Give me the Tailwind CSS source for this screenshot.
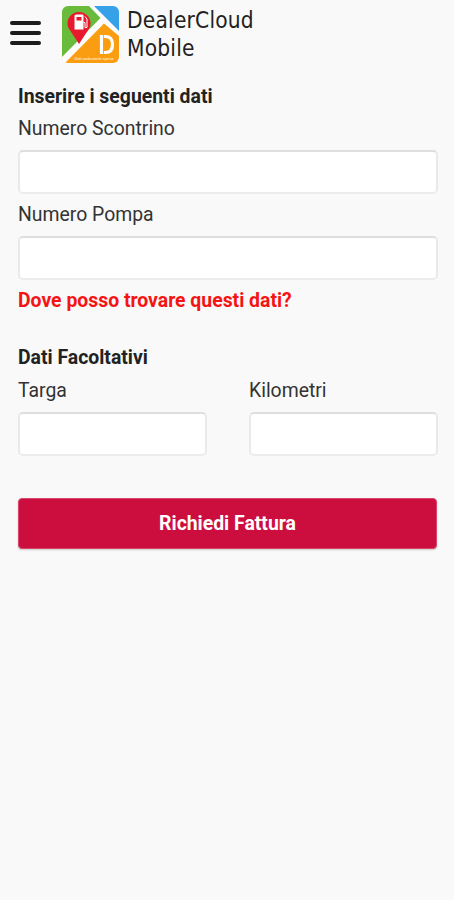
<!DOCTYPE html>
<html lang="it">
<head>
    <meta charset="UTF-8">
    <meta name="viewport" content="width=device-width, initial-scale=1.0">
    <title>DealerCloud Mobile</title>
    <script src="https://cdn.jsdelivr.net/npm/@tailwindcss/browser@4"></script>
</head>

<body class="min-h-screen bg-[#f9f9f9] font-[Roboto,sans-serif] text-[19.4px] leading-8 text-[#333]">
    <header class="flex h-[68px] items-start pl-[10px]">
        <button type="button" aria-label="Menu" class="mt-[21px] flex w-[31px] flex-col gap-[6px]">
            <span class="h-[4px] w-full rounded-full bg-[#1c1c1c]"></span>
            <span class="h-[4px] w-full rounded-full bg-[#1c1c1c]"></span>
            <span class="h-[4px] w-full rounded-full bg-[#1c1c1c]"></span>
        </button>

        <svg class="mt-[5.5px] ml-[21px] h-[57px] w-[57px] shrink-0" viewBox="0 0 57 57">
            <defs>
                <clipPath id="tile"><rect width="57" height="57" rx="6"/></clipPath>
            </defs>
            <g clip-path="url(#tile)">
                <rect width="57" height="57" fill="#fdfdfd"/>
                <path d="M0 0H27L38.500 12L0 51Z" fill="#69bb3c"/>
                <path d="M32 0H57V25Z" fill="#36a0e9"/>
                <path d="M42 17.500L57 30V57H3Z" fill="#fb9d11"/>
                <path d="M17 38L7.500 23.500C6 21.500 5.500 19.500 5.500 17.500A11.500 11.500 0 0 1 28.500 17.500C28.500 19.500 28 21.500 26.500 23.500Z" fill="#e8182d"/>
                <path d="M14 8.500H20.500Q21.500 8.500 21.500 9.500V23.500H12.500V10Q12.500 8.500 14 8.500Z" fill="#fff"/>
                <path d="M14.500 11H19.500V14.500H14.500Z" fill="#e8182d"/>
                <path d="M21.500 16.500H23V21.500H25V13L23 10.500" fill="none" stroke="#fff" stroke-width="1"/>
                <path d="M39.500 30.500H43.500C48.500 30.500 50.500 33.500 50.500 38.500S48.500 46.500 43.500 46.500H39.500Z" fill="none" stroke="#fff" stroke-width="3.200"/>
                <path d="M41.500 28V49" stroke="#fb9d11" stroke-width="0.800"/>
            </g>
            <text x="12.500" y="53.500" textLength="39" fill="#ffe2b5" font-family="Liberation Sans" font-size="4" font-weight="bold">Dati carburante spesa</text>
        </svg>

        <h1 class="mt-[6px] ml-[8px] w-[160px] font-['DejaVu_Sans_Condensed','DejaVu_Sans',sans-serif] text-[22.5px] font-stretch-condensed leading-[28px] tracking-[0.2px] text-[#222]">DealerCloud<br>Mobile</h1>
    </header>

    <main class="px-[18px] pt-[13px]">
        <h2 class="font-bold text-[#222]">Inserire i seguenti dati</h2>
        <label for="scontrino" class="block">Numero Scontrino</label>
        <input id="scontrino" type="text" class="my-[5px] block h-[44px] w-[420px] rounded-[5px] border-2 border-t-[#dedede] border-x-[#e9e9e9] border-b-[#ececec] bg-white px-3">
        <label for="pompa" class="block">Numero Pompa</label>
        <input id="pompa" type="text" class="my-[5px] block h-[44px] w-[420px] rounded-[5px] border-2 border-t-[#dedede] border-x-[#e9e9e9] border-b-[#ececec] bg-white px-3">
        <a href="#" class="block font-bold text-[#f51414]">Dove posso trovare questi dati?</a>

        <h2 class="mt-[25px] font-bold text-[#222]">Dati Facoltativi</h2>
        <div class="mt-px flex gap-[42px]">
            <div class="w-[189px] shrink-0">
                <label for="targa" class="block">Targa</label>
                <input id="targa" type="text" class="mt-[5px] block h-[44px] w-full rounded-[5px] border-2 border-t-[#dedede] border-x-[#e9e9e9] border-b-[#ececec] bg-white px-3">
            </div>
            <div class="w-[189px] shrink-0">
                <label for="kilometri" class="block">Kilometri</label>
                <input id="kilometri" type="text" class="mt-[5px] block h-[44px] w-full rounded-[5px] border-2 border-t-[#dedede] border-x-[#e9e9e9] border-b-[#ececec] bg-white px-3">
            </div>
        </div>

        <button type="button" class="mt-[42px] block h-[51px] w-[419px] rounded-[4px] border border-[#d8466a] bg-[#cc0e3f] font-bold text-white shadow-[0_1px_2px_rgba(0,0,0,0.2)]">Richiedi Fattura</button>
    </main>
</body>
</html>
